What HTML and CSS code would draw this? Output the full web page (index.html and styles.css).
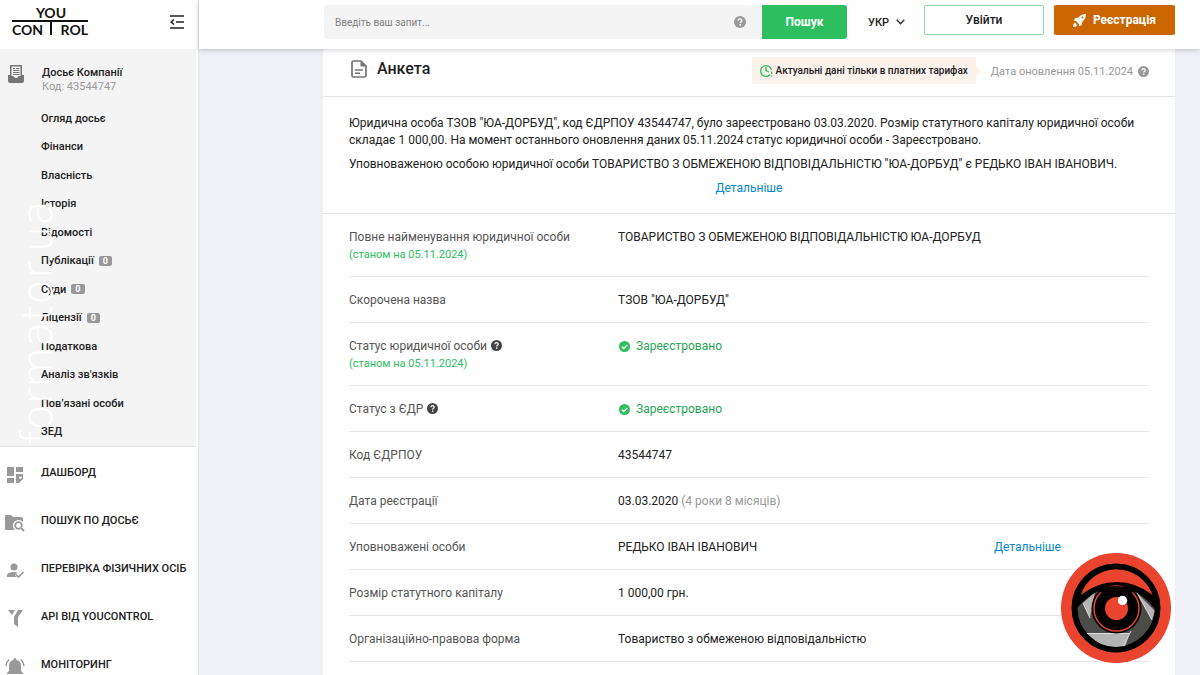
FILE: index.html
```html
<!DOCTYPE html>
<html lang="uk">
<head>
<meta charset="utf-8">
<title>YouControl — Анкета</title>
<link rel="stylesheet" href="styles.css">
</head>
<body>
<svg class="defs" aria-hidden="true">
  <symbol id="help" viewBox="0 0 12 12"><circle cx="6" cy="6" r="6" fill="currentColor"/><path d="M4.2 4.7C4.2 3.5 5 2.9 6 2.9s1.9.6 1.9 1.6C7.9 5.800 6.200 5.700 6.200 7" fill="none" stroke="#fff" stroke-width="1.300"/><circle cx="6.200" cy="8.800" r=".9" fill="#fff"/></symbol>
  <symbol id="check" viewBox="0 0 12 12"><circle cx="6" cy="6" r="6" fill="#2dbe60"/><path d="M3.200 6.200l2 2L9 4.400" fill="none" stroke="#fff" stroke-width="1.500"/></symbol>
</svg>
<div class="app">
  <aside class="sidebar">
    <div class="brand">
      <a class="logo" href="#" aria-label="YouControl">
        <svg width="78" height="32" viewBox="0 0 78 32">
          <g class="logo-text"><text x="39" y="12" text-anchor="middle">YOU</text><text x="0" y="29">CON</text><text x="76" y="29" text-anchor="end">ROL</text></g>
          <path d="M0 15h76M39 15v14" stroke="#111" stroke-width="2"/>
        </svg>
      </a>
      <button class="collapse" aria-label="Згорнути меню"><svg width="14" height="14" viewBox="0 0 14 14" fill="none" stroke="#222" stroke-width="1.600"><path d="M0 1h14M6 7h8M0 13h14M4 4.500L1.200 7 4 9.500"/></svg></button>
    </div>
    <nav class="dossier">
      <div class="company">
        <svg width="16" height="18" viewBox="0 0 16 18"><path d="M2 0h12v10h2v6q0 2-2 2H2q-2 0-2-2v-6h2z" fill="#757575"/><path d="M3.500 1.500h9V11H10.500q-.5 2-2.500 2t-2.500-2h-2z" fill="#f4f4f4"/><path d="M5 3.500h2M8 3.500h3.500M5 5.500h6.500M5 7.500h6.500M5 9.500h6.500" stroke="#757575"/></svg>
        <div><a class="company-name" href="#">Досьє Компанії</a><div class="company-code">Код: 43544747</div></div>
      </div>
      <ul class="submenu">
        <li><a href="#">Огляд досьє</a></li>
        <li><a href="#">Фінанси</a></li>
        <li><a href="#">Власність</a></li>
        <li><a href="#">Історія</a></li>
        <li><a href="#">Відомості</a></li>
        <li><a href="#">Публікації</a><span class="count">0</span></li>
        <li><a href="#">Суди</a><span class="count">0</span></li>
        <li><a href="#">Ліцензії</a><span class="count">0</span></li>
        <li><a href="#">Податкова</a></li>
        <li><a href="#">Аналіз зв'язків</a></li>
        <li><a href="#">Пов’язані особи</a></li>
        <li><a href="#">ЗЕД</a></li>
      </ul>
    </nav>
    <nav class="mainmenu">
      <a href="#"><svg width="20" height="20" viewBox="0 0 20 20" fill="#999"><path d="M2 2h7v9H2zM11 2h7v5h-7zM2 13h7v5H2zM11 9h7v5l-4 4h-3z"/></svg>ДАШБОРД</a>
      <a href="#"><svg width="20" height="20" viewBox="0 0 20 20"><path d="M1 2h5l2 2h8q2 0 2 2v11H1Q0 17 0 16V3q0-1 1-1z" fill="#999"/><circle cx="13.500" cy="12.500" r="5.500" fill="#fff"/><circle cx="13.500" cy="12.500" r="3.300" fill="#fff" stroke="#999" stroke-width="1.800"/><path d="M16 15l3 3" stroke="#fff" stroke-width="4"/><path d="M16 15l3 3" stroke="#999" stroke-width="2"/></svg>ПОШУК ПО ДОСЬЄ</a>
      <a href="#"><svg width="20" height="20" viewBox="0 0 20 20" fill="#999"><circle cx="9" cy="6" r="3.500"/><path d="M2 16v-2q1-3 7-3 2 0 3.500.6L10 14l2 2z"/><path d="M11 13.500l2.500 2.500 5-5" fill="none" stroke="#999" stroke-width="1.600"/></svg>ПЕРЕВІРКА ФІЗИЧНИХ ОСІБ</a>
      <a href="#"><svg width="20" height="20" viewBox="0 0 20 20" fill="#999"><path d="M3 1h7L7 6zM13 1h5l-5 7v10l-4-3V8z"/></svg>АРІ ВІД YOUCONTROL</a>
      <a href="#"><svg width="20" height="20" viewBox="0 0 20 20" fill="#999"><path d="M10 1q1.500 0 1.500 1.700Q16 4 16 9v5l2 2v1H2v-1l2-2V9q0-5 4.500-6.300Q8.500 1 10 1zM8 18h4q0 2-2 2t-2-2z"/><path d="M4 2.500Q1.300 5 1 9M16 2.500Q18.700 5 19 9" fill="none" stroke="#999" stroke-width="1.500"/></svg>МОНІТОРИНГ</a>
    </nav>
  </aside>
  <div class="page">
    <header class="topbar">
      <form class="search">
        <input type="text" placeholder="Введіть ваш запит..." aria-label="Пошуковий запит">
        <svg class="search-help" width="12" height="12"><use href="#help"/></svg>
        <button type="button">Пошук</button>
      </form>
      <button class="lang">УКР<svg width="9" height="6" viewBox="0 0 9 6"><path d="M.7.700L4.500 4.700 8.300.7" fill="none" stroke="#333" stroke-width="1.500"/></svg></button>
      <a class="btn login" href="#">Увійти</a>
      <a class="btn register" href="#"><svg width="13" height="13" viewBox="0 0 13 13" fill="#fff"><path d="M13 0Q8 0 5.500 3.500L2.500 4 .5 6.500 3 7l3 3 .5 2.500L9 10.500l.5-3Q13 5 13 0z"/><circle cx="9.500" cy="3.500" r="1" fill="#cb6500"/><path d="M2.500 8.500Q0 9 0 13q4 0 4.500-2.500L3 10.700z"/></svg>Реєстрація</a>
    </header>
    <main class="card">
      <div class="card-head">
        <svg width="16" height="18" viewBox="0 0 16 18"><path d="M2.500 1H10l5 5v9.500q0 1.500-1.500 1.500h-11Q1 17 1 15.500v-13Q1 1 2.500 1z" fill="none" stroke="#757575" stroke-width="1.700"/><path d="M9.500 1v5.500H15" fill="#757575"/><path d="M4 10h8M4 13.300h5" stroke="#757575" stroke-width="1.500"/></svg>
        <h1>Анкета</h1>
        <div class="notice"><svg width="13" height="13" viewBox="0 0 13 13" fill="none" stroke="#2dbe60" stroke-width="1.300"><path d="M10 10.700A5.400 5.400 0 1 1 11.400 6M6 3v3.500l3 1.500M11.500 7.500v2.500M11.500 11.200v1.300"/></svg>Актуальні дані тільки в платних тарифах</div>
        <div class="updated">Дата оновлення 05.11.2024<svg width="11" height="11"><use href="#help"/></svg></div>
      </div>
      <section class="intro">
        <p>Юридична особа ТЗОВ "ЮА-ДОРБУД", код ЄДРПОУ 43544747, було зареєстровано 03.03.2020. Розмір статутного капіталу юридичної особи складає 1 000,00. На момент останнього оновлення даних 05.11.2024 статус юридичної особи - Зареєстровано.</p>
        <p>Уповноваженою особою юридичної особи ТОВАРИСТВО З ОБМЕЖЕНОЮ ВІДПОВІДАЛЬНІСТЮ "ЮА-ДОРБУД" є РЕДЬКО ІВАН ІВАНОВИЧ.</p>
        <a class="more" href="#">Детальніше</a>
      </section>
      <table class="facts">
        <colgroup><col class="col-name"><col><col class="col-side"></colgroup>
        <tr><th scope="row">Повне найменування юридичної особи<small>(станом на 05.11.2024)</small></th><td colspan="2">ТОВАРИСТВО З ОБМЕЖЕНОЮ ВІДПОВІДАЛЬНІСТЮ ЮА-ДОРБУД</td></tr>
        <tr><th scope="row">Скорочена назва</th><td colspan="2">ТЗОВ "ЮА-ДОРБУД"</td></tr>
        <tr><th scope="row">Статус юридичної особи<svg class="tip" width="11" height="11"><use href="#help"/></svg><small>(станом на 05.11.2024)</small></th><td colspan="2" class="ok"><svg width="11" height="11"><use href="#check"/></svg>Зареєстровано</td></tr>
        <tr><th scope="row">Статус з ЄДР<svg class="tip" width="11" height="11"><use href="#help"/></svg></th><td colspan="2" class="ok"><svg width="11" height="11"><use href="#check"/></svg>Зареєстровано</td></tr>
        <tr><th scope="row">Код ЄДРПОУ</th><td colspan="2">43544747</td></tr>
        <tr><th scope="row">Дата реєстрації</th><td colspan="2">03.03.2020 <span class="muted">(4 роки 8 місяців)</span></td></tr>
        <tr><th scope="row">Уповноважені особи</th><td>РЕДЬКО ІВАН ІВАНОВИЧ</td><td><a class="details" href="#">Детальніше</a></td></tr>
        <tr><th scope="row">Розмір статутного капіталу</th><td colspan="2">1 000,00 грн.</td></tr>
        <tr><th scope="row">Організаційно-правова форма</th><td colspan="2">Товариство з обмеженою відповідальністю</td></tr>
      </table>
    </main>
  </div>
</div>
<div class="watermark">informator.ua</div>
<svg class="eye" width="110" height="110" viewBox="0 0 110 110">
  <defs><clipPath id="lens"><circle cx="55" cy="55" r="39"/></clipPath></defs>
  <circle cx="55" cy="55" r="55" fill="#ea432e"/>
  <circle cx="55" cy="55" r="41.500" fill="#4b4b49" stroke="#000" stroke-width="6"/>
  <g clip-path="url(#lens)">
    <path d="M26 80.500h42.500L62 100 44 96z" fill="#b4b4b4"/><path d="M22 50l12-11-5 26z" fill="#b4b4b4"/><path d="M76 40l18 18-3 9z" fill="#b4b4b4"/>
    <path d="M22 50l7 15M26 80.500h42M62 94l8-16M76 40l15 27" stroke="#ddd"/>
    <path d="M8 62V8h94v54L93 55Q76 34 55.500 34T18 53z" fill="#000"/>
    <path d="M19.700 42A38 38 0 0 1 91.700 42Q75 29 55.700 29T19.700 42z" fill="#ea432e"/>
  </g>
  <circle cx="55.500" cy="55.500" r="25" fill="#000"/><circle cx="55.500" cy="55.500" r="22.500" fill="none" stroke="#ea432e" stroke-width="1.500"/>
  <path d="M35 36q20-6 41 0l-7 5q-13-5-27 0z" fill="#000"/>
  <circle cx="55.500" cy="55.500" r="11.500" fill="#ea432e"/><circle cx="61.500" cy="47.500" r="4.700" fill="#fff"/>
</svg>
</body>
</html>
```

FILE: styles.css
```css
* { box-sizing: border-box; }
body { margin: 0; background: #eff0f6; font: 12px/17px Roboto, "Liberation Sans", sans-serif; color: #212121; overflow: hidden; }
a { color: inherit; text-decoration: none; }
button { border: 0; background: none; font: inherit; color: inherit; padding: 0; cursor: pointer; }
svg { flex: none; }
.defs { position: absolute; width: 0; height: 0; }
.app { display: flex; height: 100vh; overflow: hidden; }

.sidebar { flex: 0 0 199px; background: #fff; border-right: 1px solid #e2e3ea; overflow: hidden; }
.brand { display: flex; justify-content: space-between; align-items: center; height: 49px; padding: 0 14px 6px 12px; }
.logo { display: flex; }
.logo svg { overflow: visible; }
.logo-text { font: 700 14px Lato, sans-serif; fill: #111; }
.collapse { display: flex; }
.dossier { display: flex; flex-direction: column; background: #f4f4f4; margin-right: 2px; border-bottom: 1px solid #e4e4e4; padding: 16px 0 0; height: 398px; }
.company { display: flex; gap: 18px; padding-left: 8px; line-height: 15px; }
.company-name { font-size: 11px; font-weight: 500; }
.company-code { font-size: 11px; line-height: 14px; color: #9b9b9b; }
.submenu { flex: 1; display: flex; flex-direction: column; list-style: none; margin: 10px 0 0; padding: 0 0 0 41px; font-size: 11px; font-weight: 500; }
.submenu li { flex: 1; display: flex; align-items: center; gap: 5px; }
.count { background: #999; color: #fff; font-size: 9px; line-height: 10px; border-radius: 2px; padding: 0 4px; font-weight: 700; }
.mainmenu { padding-top: 1px; }
.mainmenu a { display: flex; align-items: center; gap: 16px; height: 48px; padding-left: 5px; font-size: 11px; font-weight: 500; white-space: nowrap; }
.mainmenu svg { margin-top: 5px; }

.page { flex: 1; min-width: 0; }
.topbar { position: relative; display: flex; align-items: flex-start; height: 49px; padding: 5px 25px 0 125px; background: #fff; box-shadow: 0 1px 5px rgba(0, 0, 0, .2); }
.search { flex: 1; display: flex; align-items: center; height: 34px; background: #f4f4f4; border-radius: 3px; overflow: hidden; }
.search input { flex: 1; min-width: 0; height: 34px; border: 0; background: none; padding: 0 11px; font: 10px Roboto, sans-serif; }
.search input::placeholder { color: #808080; opacity: 1; }
.search-help { color: #999; margin-right: 16px; }
.search button { width: 85px; height: 34px; background: #2dbe60; color: #fff; font-size: 12px; font-weight: 700; }
.lang { display: flex; align-items: center; gap: 7px; height: 34px; margin: 0 19px 0 21px; font-size: 11px; font-weight: 500; }
.btn { display: flex; align-items: center; justify-content: center; gap: 7px; width: 120px; height: 30px; border-radius: 2px; font-size: 12px; font-weight: 500; }
.login { border: 1px solid #8bdca6; }
.register { width: 121px; margin-left: 10px; background: #cb6500; color: #fff; font-weight: 700; }

.card { margin: 0 25px 0 124px; background: #fff; min-height: 640px; }
.card-head { display: flex; align-items: center; height: 48px; padding: 0 26px 8px 28px; border-bottom: 1px solid #e6e6e6; }
.card-head h1 { margin: 0 auto 0 10px; font-size: 16px; line-height: 20px; font-weight: 500; }
.notice { position: relative; display: flex; align-items: center; gap: 3px; height: 27px; margin-top: 3px; padding: 0 8px; background: #fcf2ec; border-radius: 2px; font-size: 10px; font-weight: 500; }
.notice::after { content: ""; position: absolute; left: 100%; top: 9px; border: 5px solid transparent; border-left-color: #fcf2ec; border-right: 0; }
.updated { display: flex; align-items: center; gap: 5px; margin: 6px 0 0 15px; color: #999; font-size: 11px; }
.intro { padding: 18px 26px 16px; border-bottom: 1px solid #e6e6e6; }
.intro p { margin: 0 0 7px; }
.more { display: block; text-align: center; }
.more, .details { color: #0288d1; }
.facts { width: calc(100% - 52px); margin: 0 26px; border-collapse: separate; border-spacing: 0; table-layout: fixed; }
.facts th, .facts td { padding: 15px 0 13px; border-bottom: 1px solid #e6e6e6; text-align: left; vertical-align: top; font-weight: 400; }
.col-name { width: 269px; }
.col-side { width: 155px; }
.facts th { color: #555; }
.facts small { display: block; font-size: 11px; color: #2dbe60; }
.facts .ok { color: #27a355; }
.ok svg { margin: 0 6px 0 1px; vertical-align: -2px; }
.tip { margin-left: 4px; vertical-align: -1px; color: #444; }
.muted { color: #999; }

.watermark { position: absolute; left: 15px; top: 200px; writing-mode: vertical-rl; transform: rotate(180deg); font: 200 42px/46px "DejaVu Sans Light", "DejaVu Sans", sans-serif; color: #fff; pointer-events: none; }
.eye { position: absolute; right: 29px; bottom: 12px; }
```
